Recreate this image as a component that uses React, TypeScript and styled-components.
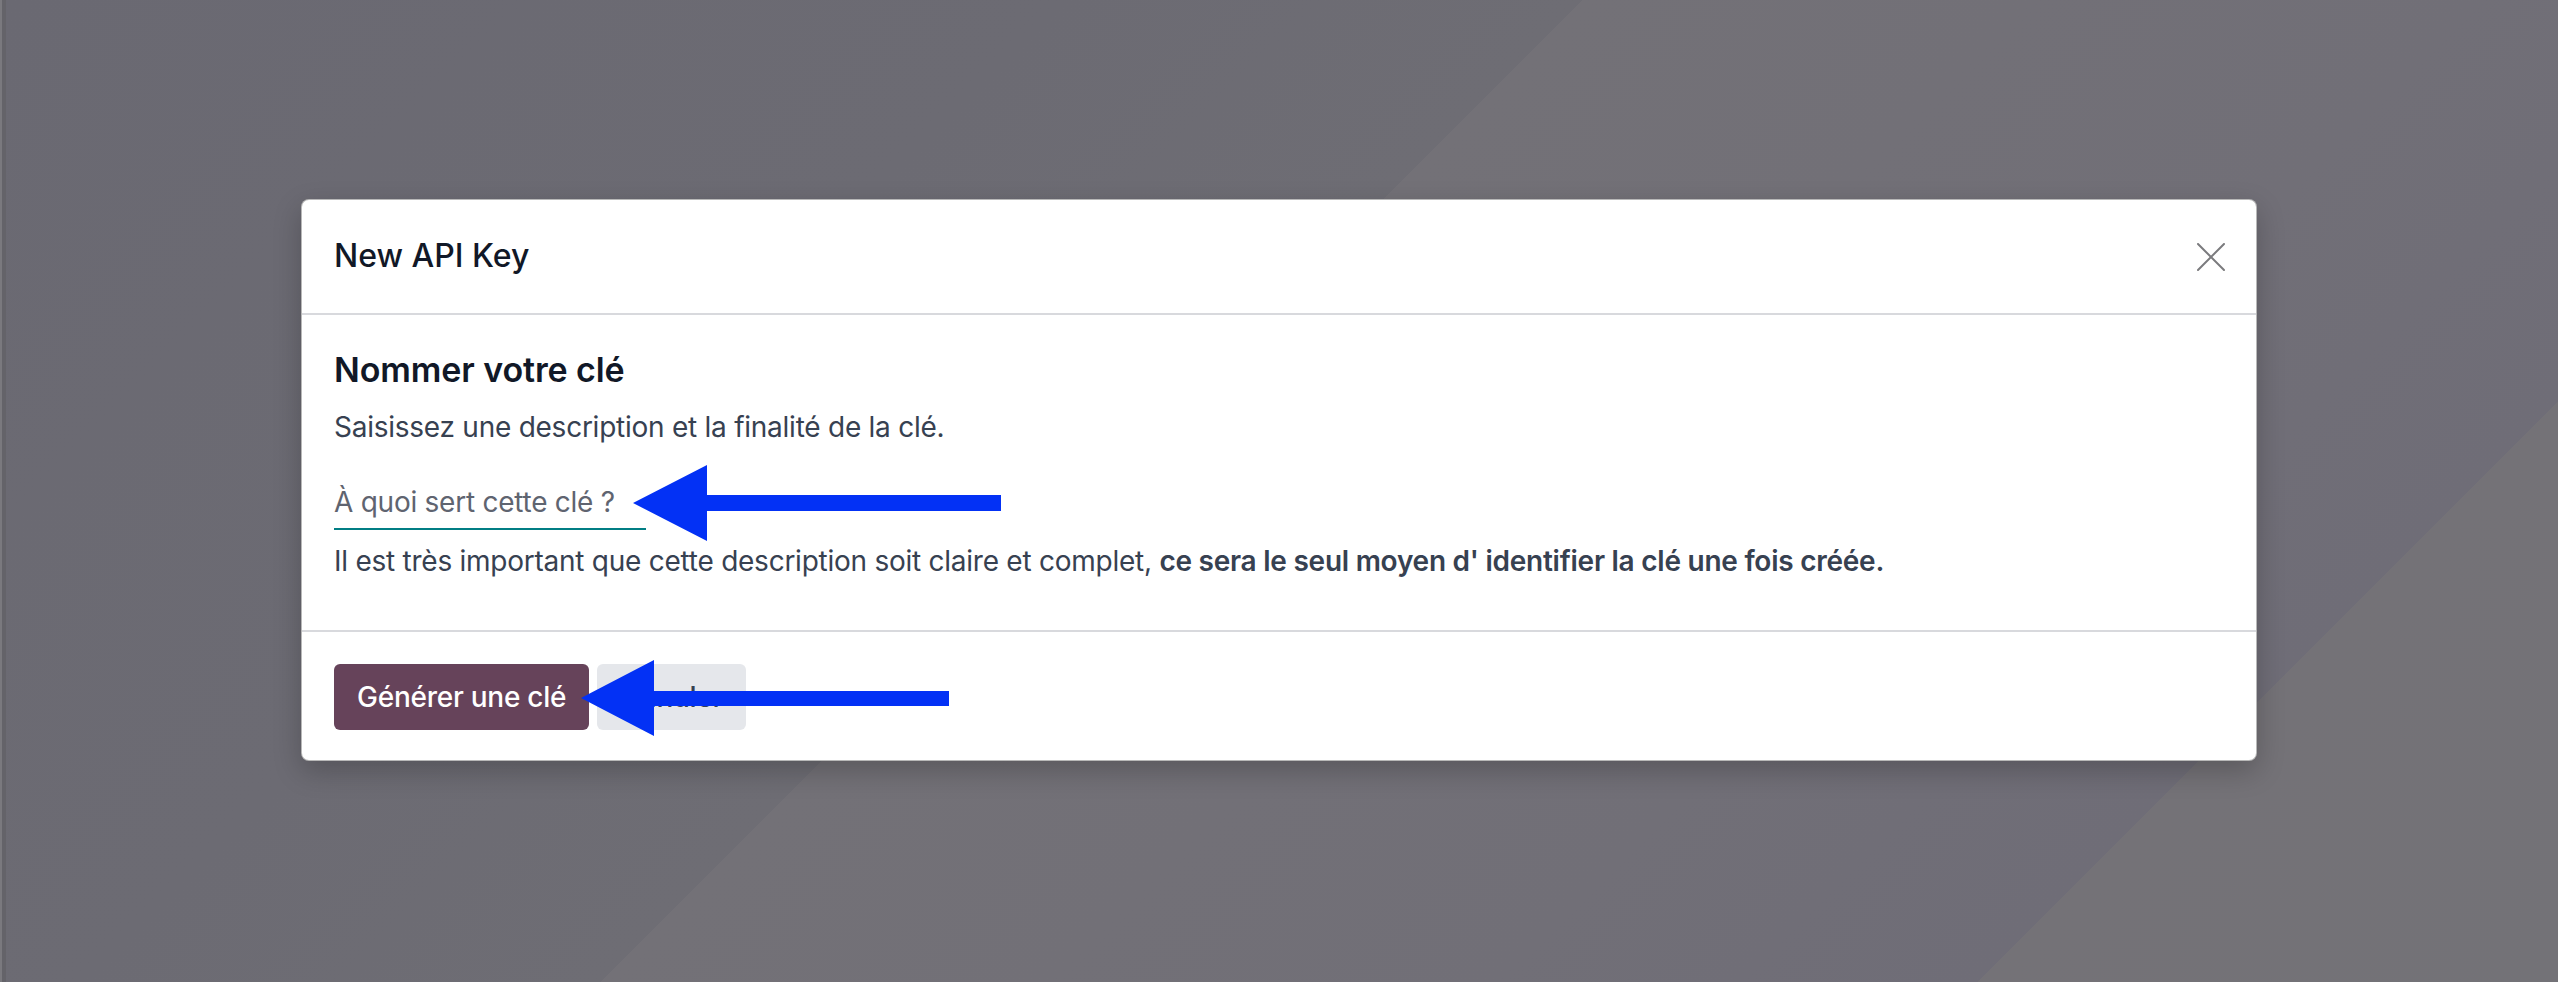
import React from "react";
import styled, { createGlobalStyle } from "styled-components";

const GlobalStyle = createGlobalStyle`
  html, body {
    margin: 0;
    padding: 0;
  }
  body {
    font-family: Inter, "Noto Sans", "Liberation Sans", sans-serif;
    -webkit-font-smoothing: antialiased;
  }
  * {
    box-sizing: border-box;
  }
`;

const App: React.FC = () => {
  return (
    <>
      <GlobalStyle />
      <Backdrop>
        <Modal>
          <Header>
            <Title>New API Key</Title>
            <CloseButton aria-label="Close">
              <svg width="28" height="28" viewBox="0 0 28 28">
                <path d="M1 1 L27 27 M27 1 L1 27" stroke="#7b7b7e" strokeWidth="2" strokeLinecap="round" />
              </svg>
            </CloseButton>
          </Header>

          <Body>
            <Heading>Nommer votre clé</Heading>
            <Text>Saisissez une description et la finalité de la clé.</Text>
            <NameInput placeholder="À quoi sert cette clé ?" />
            <Hint>
              Il est très important que cette description soit claire et complet,{" "}
              <b>ce sera le seul moyen d' identifier la clé une fois créée.</b>
            </Hint>
          </Body>

          <Footer>
            <Button $primary>Générer une clé</Button>
            <Button>Annuler</Button>
          </Footer>

          {/* annotation arrows drawn over the dialog */}
          <Arrow $left={327} $top={264} width="372" height="78" viewBox="0 0 372 78">
            <polygon points="4,39 78,1 78,31 372,31 372,47 78,47 78,77" fill="#0331f5" />
          </Arrow>
          <Arrow $left={275} $top={459} width="372" height="80" viewBox="0 0 372 80">
            <polygon points="4,39 77,1 77,32 372,32 372,47 77,47 77,77" fill="#0331f5" />
          </Arrow>
        </Modal>
      </Backdrop>
    </>
  );
};

export default App;

const Backdrop = styled.div`
  min-height: 100vh;
  display: flex;
  justify-content: center;
  align-items: flex-start;
  padding-top: 199px;
  background:
    linear-gradient(90deg, #7a797e 0 2px, #646369 2px 6px, transparent 6px),
    linear-gradient(
      135deg,
      #6a6972 0%,
      #6c6b73 30%,
      #6e6d74 44.7%,
      #737177 44.7%,
      #716f77 70%,
      #6f6d77 83.6%,
      #747277 83.6%,
      #737277 100%
    );
`;

const Modal = styled.div`
  position: relative;
  width: 1956px;
  background: #ffffff;
  border: 1px solid rgba(0, 0, 0, 0.28);
  border-radius: 8px;
  box-shadow: 0 10px 28px rgba(0, 0, 0, 0.22);
`;

const Header = styled.div`
  height: 115px;
  padding: 0 31px 0 32px;
  display: flex;
  align-items: center;
  justify-content: space-between;
  border-bottom: 2px solid #d8d9dd;
`;

const Title = styled.h4`
  margin: 0;
  font-size: 32px;
  font-weight: 500;
  line-height: 1.2;
  color: #111827;
`;

const CloseButton = styled.button`
  width: 28px;
  height: 28px;
  padding: 0;
  border: none;
  background: transparent;
  display: flex;
  align-items: center;
  justify-content: center;
  cursor: pointer;
`;

const Body = styled.div`
  padding: 34px 32px 48px;
  display: flex;
  flex-direction: column;
  align-items: flex-start;
`;

const Heading = styled.h3`
  margin: 0 0 16px;
  font-size: 34px;
  font-weight: 600;
  line-height: 41px;
  letter-spacing: -0.1px;
  color: #111827;
`;

const Text = styled.p`
  margin: 0 0 31px;
  font-size: 28px;
  line-height: 42px;
  letter-spacing: -0.25px;
  color: #374151;
`;

const NameInput = styled.input`
  width: 312px;
  height: 51px;
  padding: 2px 0 5px;
  margin: 0 0 10px;
  font-family: inherit;
  font-size: 28px;
  line-height: 42px;
  letter-spacing: -0.25px;
  color: #374151;
  border: none;
  border-bottom: 2px solid #017e84;
  outline: none;
  background: transparent;

  &::placeholder {
    color: #5f6470;
  }
`;

const Hint = styled.p`
  margin: 0;
  font-size: 28px;
  line-height: 42px;
  letter-spacing: -0.25px;
  color: #374151;

  b {
    font-weight: 600;
  }
`;

const Footer = styled.div`
  padding: 32px 32px 30px;
  display: flex;
  gap: 8px;
  border-top: 2px solid #d8d9dd;
`;

const Button = styled.button<{ $primary?: boolean }>`
  height: 66px;
  padding: 0 23px;
  border: none;
  border-radius: 6px;
  font-family: inherit;
  font-size: 28px;
  font-weight: 500;
  letter-spacing: -0.25px;
  background: ${(p) => (p.$primary ? "#66435a" : "#e5e7eb")};
  color: ${(p) => (p.$primary ? "#ffffff" : "#374151")};
  cursor: pointer;
`;

const Arrow = styled.svg<{ $left: number; $top: number }>`
  position: absolute;
  left: ${(p) => p.$left}px;
  top: ${(p) => p.$top}px;
  pointer-events: none;
`;
